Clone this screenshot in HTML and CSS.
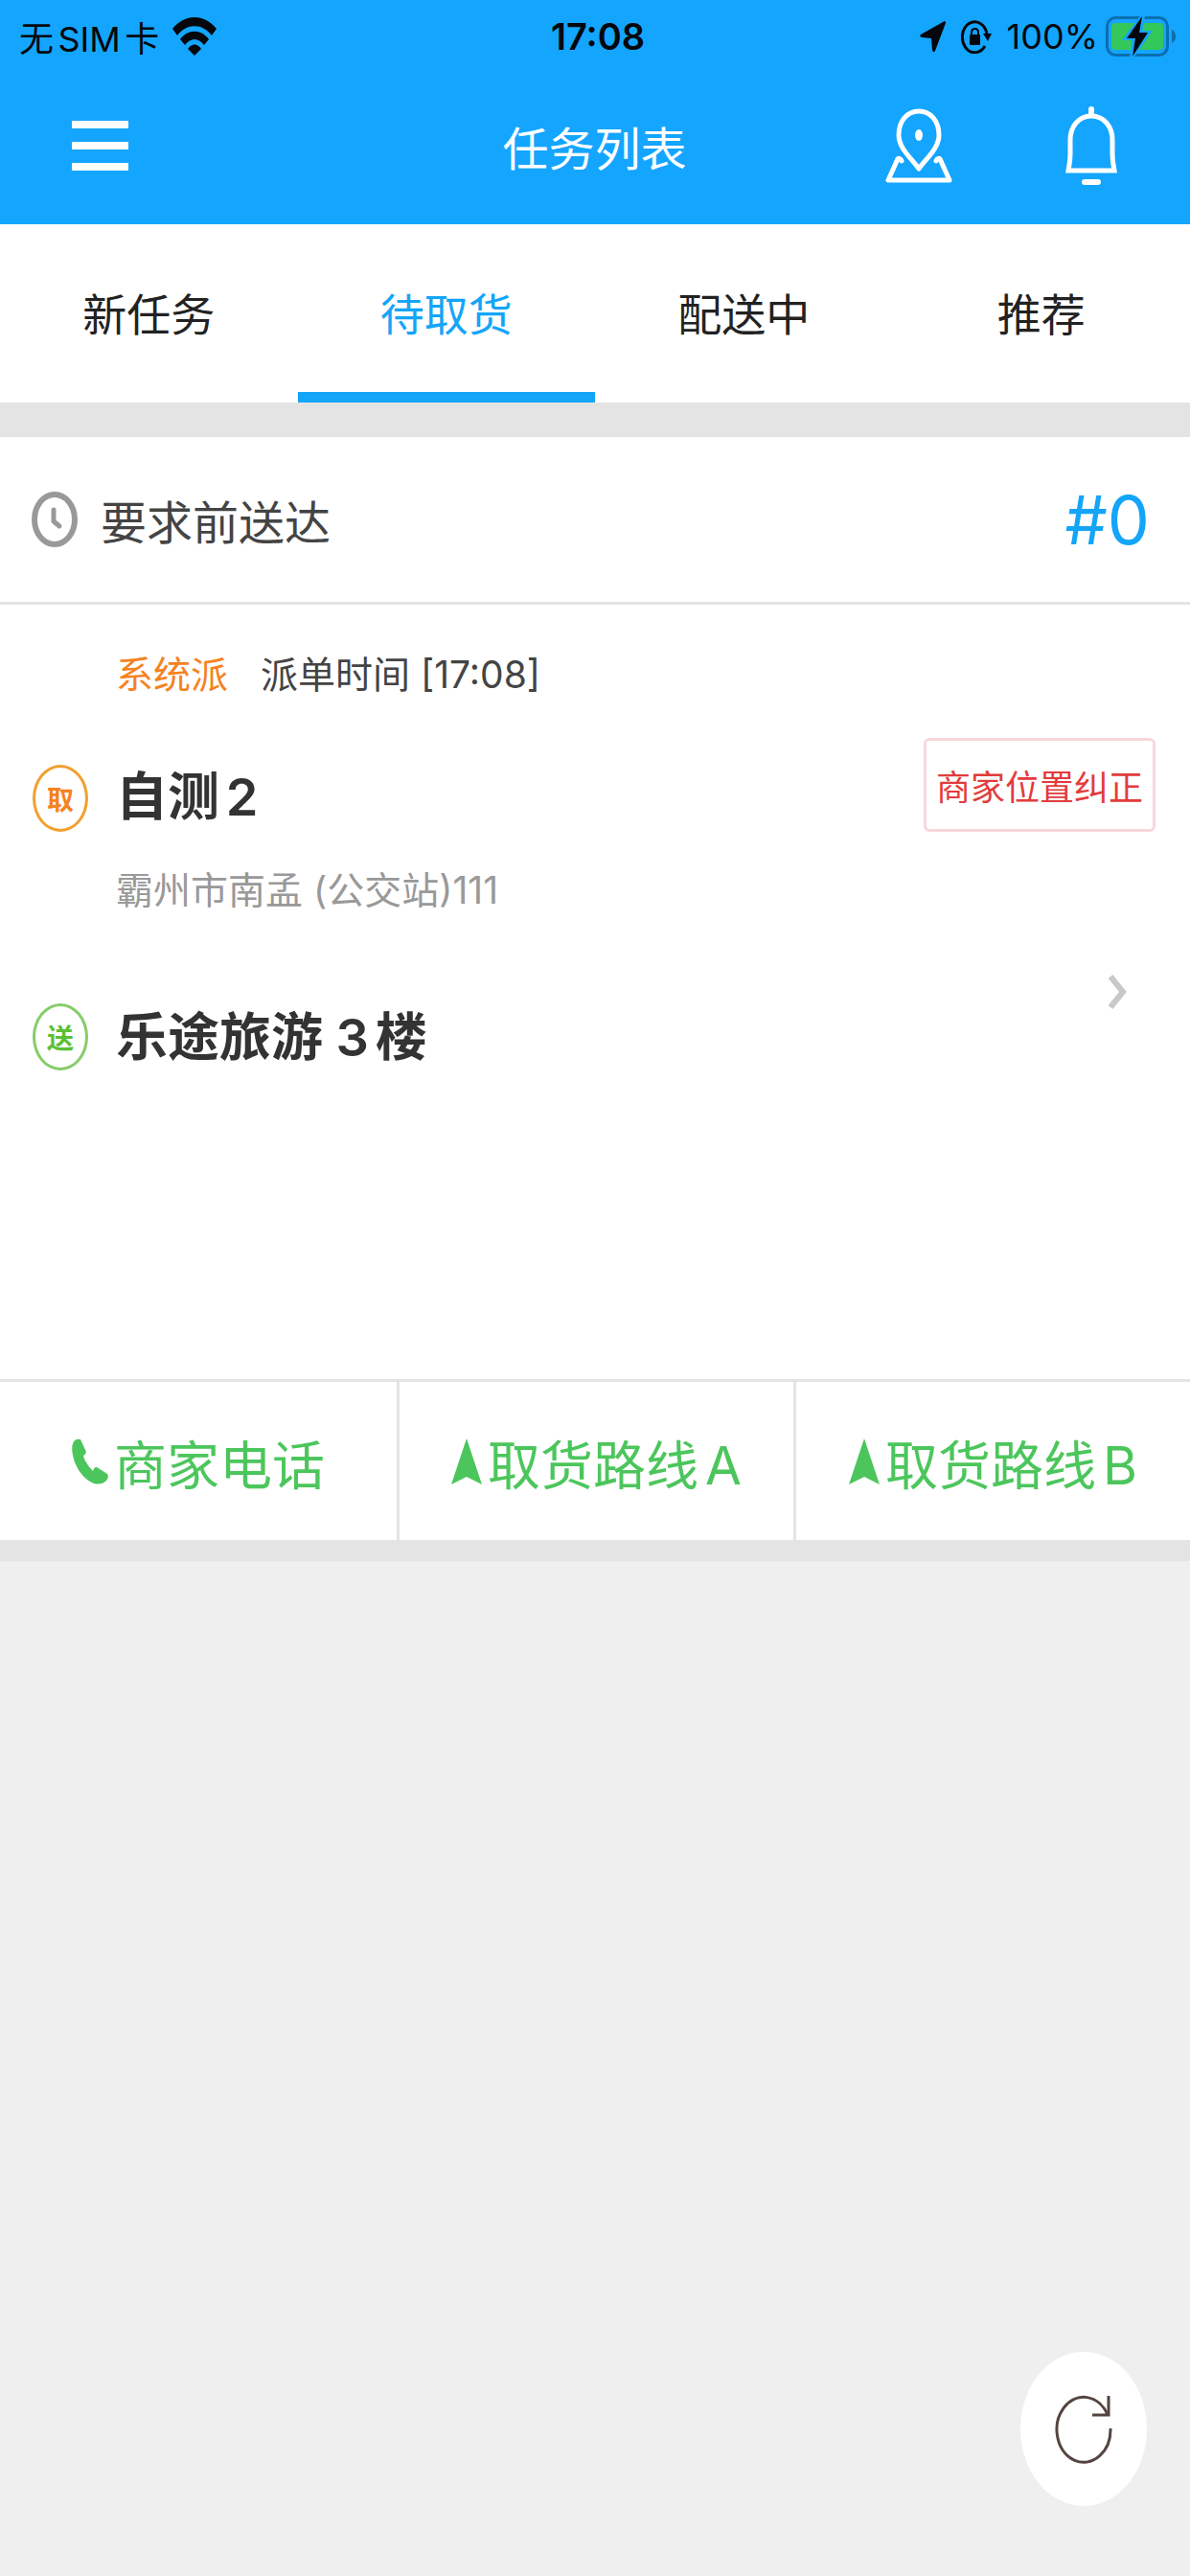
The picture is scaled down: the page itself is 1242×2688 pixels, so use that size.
FILE: index.html
```html
<!DOCTYPE html>
<html lang="zh-CN">
<head>
<meta charset="utf-8">
<meta name="viewport" content="width=device-width, initial-scale=1">
<title>任务列表</title>
<link rel="stylesheet" href="styles.css">
</head>
<body>
<header class="header">
  <div class="status">
    <div class="status-left">
      <span>无SIM卡</span>
      <svg class="icon" width="46" height="40" viewBox="0 0 46 40" aria-hidden="true">
        <path d="M0 12C13-4 33-4 46 12L41 19C31 6 15 6 5 19Z"/>
        <path d="M8 23C16 12 30 12 38 23L33 29C27 21 19 21 13 29Z"/>
        <path d="M16 33C20 27 26 27 30 33L23 40Z"/>
      </svg>
    </div>
    <time class="status-time">17:08</time>
    <div class="status-right">
      <svg class="icon" width="27" height="33" viewBox="0 0 27 33" aria-hidden="true">
        <path d="M26 0Q27 0 27 2L16 31Q14 34 13 30L12 18L2 17Q-1 16 1 14L24 1Z"/>
      </svg>
      <svg class="icon icon-lock" width="32" height="36" viewBox="0 0 32 36" aria-hidden="true">
        <path d="M25 28A13 16 0 1 1 27 15" fill="none" stroke="#05070c" stroke-width="3"/>
        <path d="M23 15H32L28 23Z"/>
        <rect x="9" y="16" width="11" height="11" rx="1"/>
        <path d="M11 17V14Q11 10 14.500 10T18 14V17" fill="none" stroke="#05070c" stroke-width="2"/>
      </svg>
      <span>100%</span>
      <svg class="icon" width="74" height="46" viewBox="0 0 74 46" aria-hidden="true">
        <rect x="1.500" y="3.500" width="63" height="39" rx="9" fill="none" stroke="#0b6fb0" stroke-width="3"/>
        <rect x="6" y="9" width="54" height="28" rx="4" fill="#34c759"/>
        <path d="M69 16Q73 18 73 23T69 30Z" fill="#0b6fb0"/>
        <path d="M39 1L21 25H30L27 45L45 19H36Z" stroke="#14a5ff" stroke-width="4"/>
        <path d="M38 2L22 25H31L28 44L44 19H35Z"/>
      </svg>
    </div>
  </div>
  <div class="navbar">
    <button class="icon-button" type="button" aria-label="菜单">
      <svg width="59" height="52" viewBox="0 0 59 52" fill="#fff"><path d="M0 0H59V8H0ZM0 22H59V30H0ZM0 44H59V52H0Z"/></svg>
    </button>
    <h1 class="title">任务列表</h1>
    <div class="navbar-actions">
      <button class="icon-button" type="button" aria-label="地图">
        <svg width="70" height="80" viewBox="0 0 70 80" fill="none" stroke="#fff" stroke-width="5" stroke-linejoin="round" stroke-linecap="round">
          <path d="M35 64C28 54 14 43 14 29C14 14 23 4 35 4S56 14 56 29C56 43 42 54 35 64Z"/>
          <path d="M17 56C16 53 13 52 12 56L3 76H67L58 56C57 52 54 53 53 56"/>
          <ellipse cx="35" cy="29" rx="4" ry="6" fill="#fff" stroke="none"/>
        </svg>
      </button>
      <button class="icon-button" type="button" aria-label="通知">
        <svg width="54" height="82" viewBox="0 0 54 82" fill="none" stroke="#fff" stroke-width="5">
          <path d="M27 10C13 10 5 22 5 35V50C5 57 4 61 3 67H51C50 61 49 57 49 50V35C49 22 41 10 27 10Z"/>
          <path d="M27 3V9" stroke-width="6" stroke-linecap="round"/>
          <path d="M20 79H34" stroke-width="6" stroke-linecap="round"/>
        </svg>
      </button>
    </div>
  </div>
</header>

<nav class="tabs">
  <a class="tab" href="#new">新任务</a>
  <a class="tab tab-active" href="#pickup" aria-current="page">待取货</a>
  <a class="tab" href="#delivery">配送中</a>
  <a class="tab" href="#recommend">推荐</a>
</nav>

<main>
  <article class="card">
    <div class="card-head">
      <svg width="48" height="58" viewBox="0 0 48 58" fill="none" stroke="#999" aria-hidden="true">
        <ellipse cx="24" cy="29" rx="21" ry="26" stroke-width="6"/>
        <path d="M23 19V31L29 36" stroke-width="5" stroke-linecap="round" stroke-linejoin="round"/>
      </svg>
      <h2 class="deadline">要求前送达</h2>
      <span class="order-number">#0</span>
    </div>
    <div class="card-body">
      <p class="meta"><span class="source">系统派</span><span>派单时间 [17:08]</span></p>
      <span class="badge badge-pickup">取</span>
      <h3 class="place pickup-name">自测2</h3>
      <button class="correct" type="button">商家位置纠正</button>
      <p class="address">霸州市南孟 (公交站)111</p>
      <span class="badge badge-drop">送</span>
      <h3 class="place drop-name">乐途旅游 3楼</h3>
      <a class="detail" href="#detail" aria-label="查看详情">
        <svg width="20" height="36" viewBox="0 0 20 36" fill="none" stroke="#c8c8c8" stroke-width="6"><path d="M3 2L16 18L3 34"/></svg>
      </a>
    </div>
    <div class="actions">
      <button class="action" type="button">
        <svg width="38" height="48" viewBox="0 0 38 48" aria-hidden="true"><path d="M2 3Q5 0 9 1L15 14Q15 16 12 18Q14 26 22 34Q24 29 26 30L37 37Q39 40 36 44Q31 49 23 47Q10 42 3 25Q-2 10 2 3Z"/></svg>
        <span>商家电话</span>
      </button>
      <button class="action" type="button">
        <svg width="32" height="48" viewBox="0 0 32 48" aria-hidden="true"><path d="M16 0L32 48L16 40L0 48Z"/></svg>
        <span>取货路线A</span>
      </button>
      <button class="action" type="button">
        <svg width="32" height="48" viewBox="0 0 32 48" aria-hidden="true"><path d="M16 0L32 48L16 40L0 48Z"/></svg>
        <span>取货路线B</span>
      </button>
    </div>
  </article>
</main>

<button class="refresh" type="button" aria-label="刷新">
  <svg width="60" height="72" viewBox="0 0 60 72" fill="none" stroke="#54443f" stroke-width="3">
    <path d="M58 35A28 34 0 1 1 55 21"/>
    <path d="M56 1V21H39"/>
  </svg>
</button>
</body>
</html>
```
FILE: styles.css
```css
* {
  box-sizing: border-box;
}

body {
  margin: 0;
  min-height: 100vh;
  background: #efefef;
  color: #333;
  font-family: Inter, "Noto Sans CJK SC", sans-serif;
  text-autospace: normal;
}

h1, h2, h3, p {
  margin: 0;
  font-weight: 400;
}

button {
  padding: 0;
  border: 0;
  background: none;
  color: inherit;
  font-family: inherit;
  text-autospace: inherit;
}

a {
  color: inherit;
  text-decoration: none;
}

svg {
  display: block;
  flex: none;
}

.header {
  background: #14a5ff;
}

.status {
  display: grid;
  grid-template-columns: 1fr auto 1fr;
  align-items: center;
  height: 76px;
  padding: 0 14px 0 20px;
  color: #05070c;
  font-size: 36px;
}

.status-left,
.status-right {
  display: flex;
  align-items: center;
}

.status-left {
  gap: 14px;
}

.status-right {
  justify-content: flex-end;
  gap: 8px;
}

.icon {
  fill: #05070c;
}

.icon-lock {
  margin: 0 8px;
}

.status-time {
  font-size: 38px;
  font-weight: 600;
}

.navbar {
  display: grid;
  grid-template-columns: 1fr auto 1fr;
  align-items: center;
  height: 158px;
  padding: 0 76px 6px 75px;
}

.icon-button {
  justify-self: start;
}

.title {
  color: #fff;
  font-size: 48px;
}

.navbar-actions {
  display: flex;
  justify-content: flex-end;
  align-items: center;
  gap: 118px;
}

.tabs {
  display: grid;
  grid-template-columns: repeat(4, 1fr);
  height: 186px;
  background: #fff;
}

.tab {
  display: flex;
  align-items: center;
  justify-content: center;
  border-top: 6px solid transparent;
  border-bottom: 11px solid transparent;
  color: #222;
  font-size: 46px;
}

.tab-active {
  border-bottom-color: #14a5f8;
  color: #14a5f8;
}

.card {
  border-top: 36px solid #e4e4e4;
  border-bottom: 22px solid #e4e4e4;
  background: #fff;
}

.card-head {
  display: flex;
  align-items: center;
  gap: 24px;
  height: 175px;
  padding: 0 42px 0 33px;
  border-bottom: 3px solid #e4e4e4;
}

.deadline {
  flex: 1;
  color: #444;
  font-size: 48px;
}

.order-number {
  color: #14a5f8;
  font-size: 70px;
}

.card-body {
  display: grid;
  grid-template-columns: 87px 1fr auto;
  grid-template-rows: auto auto auto 1fr;
  min-height: 808px;
  padding: 48px 36px 48px 34px;
}

.meta {
  display: flex;
  gap: 34px;
  grid-row: 1;
  grid-column: 2 / 4;
  color: #444;
  font-size: 39px;
  line-height: 50px;
}

.source {
  color: #f5821f;
}

.badge {
  display: flex;
  align-items: center;
  justify-content: center;
  grid-column: 1;
  width: 58px;
  height: 70px;
  border: 3px solid;
  border-radius: 50%;
  font-size: 28px;
  font-weight: 700;
}

.badge-pickup {
  grid-row: 2;
  align-self: end;
  border-color: #f0a030;
  color: #f5821f;
}

.badge-drop {
  grid-row: 4;
  margin-top: 93px;
  border-color: #86cc6a;
  color: #5cbf34;
}

.place {
  grid-column: 2;
  font-size: 54px;
  font-weight: 600;
  line-height: 72px;
}

.pickup-name {
  grid-row: 2;
  align-self: end;
}

.drop-name {
  grid-row: 4;
  margin-top: 93px;
}

.correct {
  grid-row: 2;
  grid-column: 3;
  height: 98px;
  margin-top: 41px;
  padding: 0 10px;
  border: 3px solid #f6d8dc;
  border-radius: 6px;
  color: #e23c3c;
  font-size: 36px;
}

.address {
  grid-row: 3;
  grid-column: 2;
  margin-top: 36px;
  color: #999;
  font-size: 39px;
  line-height: 50px;
}

.detail {
  grid-row: 1 / -1;
  grid-column: 3;
  align-self: center;
  justify-self: end;
  margin-right: 30px;
}

.actions {
  display: grid;
  grid-template-columns: repeat(3, 1fr);
  height: 168px;
  border-top: 3px solid #e4e4e4;
}

.action {
  display: flex;
  align-items: center;
  justify-content: center;
  gap: 6px;
  color: #4cc65c;
  fill: #4cc65c;
  font-size: 55px;
}

.action + .action {
  border-left: 3px solid #e4e4e4;
}

.refresh {
  position: fixed;
  right: 45px;
  bottom: 73px;
  display: flex;
  align-items: center;
  justify-content: center;
  width: 132px;
  height: 161px;
  border-radius: 50%;
  background: #fff;
}
```
